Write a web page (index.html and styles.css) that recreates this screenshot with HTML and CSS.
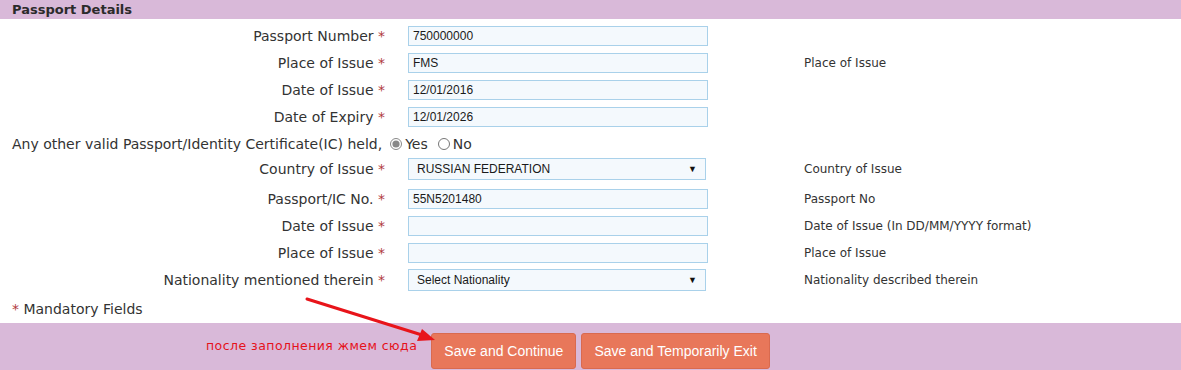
FILE: index.html
```html
<!DOCTYPE html>
<html>
<head>
  <title>Passport Details</title>
  <link rel="stylesheet" href="styles.css">
</head>
<body>
<div class="section-title">Passport Details</div>

<div class="form">
  <div class="row">
    <label class="lbl">Passport Number <span class="req">*</span></label>
    <div class="field"><div class="txt">750000000</div></div>
    <div class="hint"></div>
  </div>
  <div class="row">
    <label class="lbl">Place of Issue <span class="req">*</span></label>
    <div class="field"><div class="txt">FMS</div></div>
    <div class="hint">Place of Issue</div>
  </div>
  <div class="row">
    <label class="lbl">Date of Issue <span class="req">*</span></label>
    <div class="field"><div class="txt">12/01/2016</div></div>
    <div class="hint"></div>
  </div>
  <div class="row">
    <label class="lbl">Date of Expiry <span class="req">*</span></label>
    <div class="field"><div class="txt">12/01/2026</div></div>
    <div class="hint"></div>
  </div>

  <div class="row row-radio">
    <span class="question">Any other valid Passport/Identity Certificate(IC) held,</span>
    <label class="opt"><input type="radio" name="other" checked> Yes</label>
    <label class="opt"><input type="radio" name="other"> No</label>
  </div>

  <div class="row row-short">
    <label class="lbl">Country of Issue <span class="req">*</span></label>
    <div class="field"><div class="sel"><span>RUSSIAN FEDERATION</span><span class="caret">&#9660;</span></div></div>
    <div class="hint">Country of Issue</div>
  </div>
  <div class="row row-tall">
    <label class="lbl">Passport/IC No. <span class="req">*</span></label>
    <div class="field"><div class="txt">55N5201480</div></div>
    <div class="hint">Passport No</div>
  </div>
  <div class="row">
    <label class="lbl">Date of Issue <span class="req">*</span></label>
    <div class="field"><div class="txt"></div></div>
    <div class="hint">Date of Issue (In DD/MM/YYYY format)</div>
  </div>
  <div class="row">
    <label class="lbl">Place of Issue <span class="req">*</span></label>
    <div class="field"><div class="txt"></div></div>
    <div class="hint">Place of Issue</div>
  </div>
  <div class="row">
    <label class="lbl">Nationality mentioned therein <span class="req">*</span></label>
    <div class="field"><div class="sel"><span>Select Nationality</span><span class="caret">&#9660;</span></div></div>
    <div class="hint">Nationality described therein</div>
  </div>

  <div class="mandatory"><span class="req">*</span> Mandatory Fields</div>
</div>

<div class="actions">
  <span class="note">после заполнения жмем сюда</span>
  <button class="btn">Save and Continue</button>
  <button class="btn">Save and Temporarily Exit</button>
</div>

<svg class="arrow" width="1181" height="370" viewBox="0 0 1181 370">
  <line x1="307" y1="299" x2="422" y2="335" stroke="#e8141a" stroke-width="3" stroke-linecap="round"/>
  <polygon points="435,340 417,341 422,329" fill="#e8141a"/>
</svg>
</body>
</html>
```

FILE: styles.css
```css
body {
    margin: 0;
    font-family: "DejaVu Sans", Verdana, sans-serif;
    color: #333333;
    background: #ffffff;
    position: relative;
    height: 370px;
    overflow: hidden;
}

.section-title {
    background: #d9b9d9;
    height: 19px;
    line-height: 20px;
    padding-left: 12px;
    font-size: 13px;
    font-weight: bold;
    color: #2b2b2b;
}

.form {
    padding-top: 3px;
}

.row {
    display: grid;
    grid-template-columns: 385px 300px 1fr;
    column-gap: 23px;
    align-items: center;
    height: 27px;
}

.row-short {
    height: 23px;
}

.row-tall {
    height: 27px;
    margin-top: 5px;
}

.lbl {
    text-align: right;
    font-size: 14px;
    white-space: nowrap;
}

.req {
    color: #b0383c;
}

.txt {
    box-sizing: border-box;
    height: 20px;
    border: 1px solid #a9d1ea;
    background: #f4f9fd;
    font-family: "Liberation Sans", Arial, sans-serif;
    font-size: 12px;
    line-height: 18px;
    color: #1a1a1a;
    padding-left: 4px;
}

.sel {
    box-sizing: border-box;
    width: 298px;
    height: 22px;
    border: 1px solid #a9d1ea;
    background: #f4f9fd;
    font-family: "Liberation Sans", Arial, sans-serif;
    font-size: 12px;
    color: #1a1a1a;
    display: flex;
    align-items: center;
    justify-content: space-between;
    padding: 0 8px 0 8px;
}

.caret {
    font-size: 9px;
    color: #111;
}

.hint {
    font-size: 12px;
    padding-left: 73px;
    white-space: nowrap;
}

.row-radio {
    display: flex;
    column-gap: 0;
    align-items: center;
    padding-left: 12px;
    font-size: 14px;
    height: 26px;
    margin-top: 1px;
}

.question {
    margin-right: 8px;
}

.opt {
    display: flex;
    align-items: center;
    margin-right: 10px;
}

.opt input {
    margin: 0 3px 0 0;
    width: 12px;
    height: 12px;
    accent-color: #888888;
}

.mandatory {
    font-size: 14px;
    padding-left: 12px;
    height: 30px;
    line-height: 30px;
    margin-top: 1px;
}

.actions {
    position: absolute;
    left: 0;
    right: 0;
    top: 323px;
    height: 47px;
    background: #d9b9d9;
    display: flex;
    align-items: flex-start;
    padding-left: 206px;
    padding-top: 10px;
    box-sizing: border-box;
}

.note {
    color: #e5121b;
    font-size: 12.5px;
    letter-spacing: 0.45px;
    margin-top: 5px;
    margin-right: 14px;
}

.btn {
    font-family: "Liberation Sans", Arial, sans-serif;
    font-size: 14px;
    color: #ffffff;
    background: #e8775a;
    border: 1px solid #d96a4f;
    border-radius: 3px;
    height: 36px;
    padding: 0 12px;
    margin-right: 5px;
}

.arrow {
    position: absolute;
    left: 0;
    top: 0;
    pointer-events: none;
}
```
